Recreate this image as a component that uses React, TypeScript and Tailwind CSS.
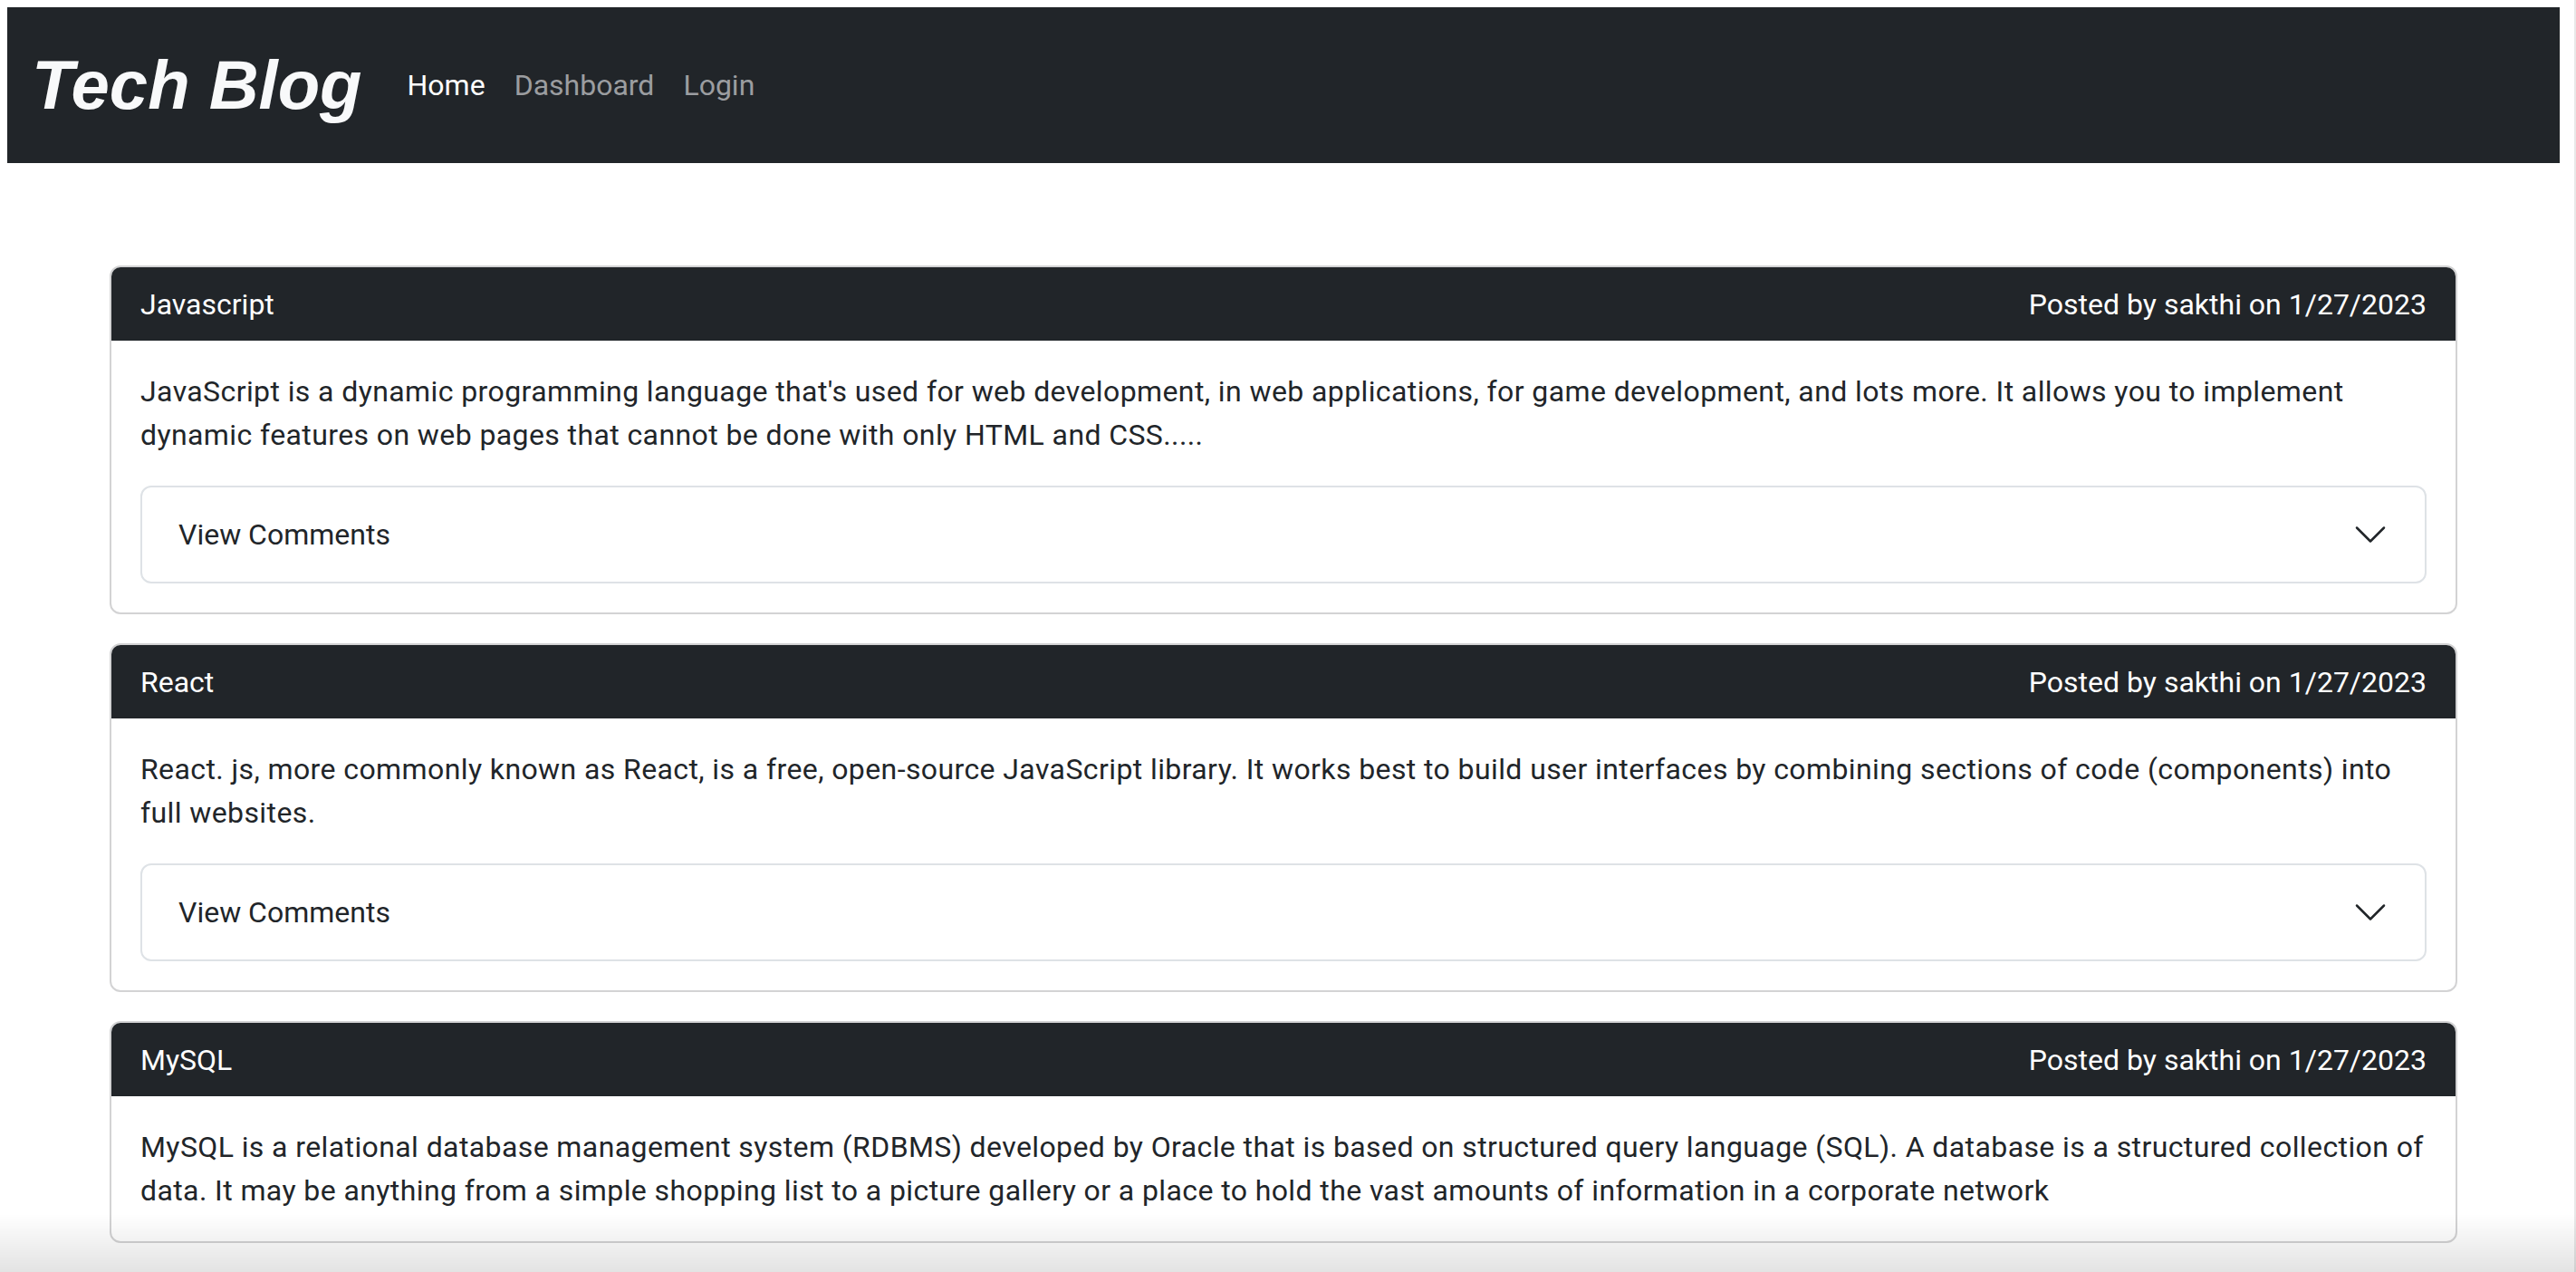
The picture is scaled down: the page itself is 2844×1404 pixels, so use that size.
import { useState } from 'react';

type Post = {
  id: number;
  title: string;
  author: string;
  date: string;
  body: string;
  comments: boolean;
};

const posts: Post[] = [
  {
    id: 1,
    title: 'Javascript',
    author: 'sakthi',
    date: '1/27/2023',
    body: "JavaScript is a dynamic programming language that's used for web development, in web applications, for game development, and lots more. It allows you to implement dynamic features on web pages that cannot be done with only HTML and CSS.....",
    comments: true,
  },
  {
    id: 2,
    title: 'React',
    author: 'sakthi',
    date: '1/27/2023',
    body: 'React. js, more commonly known as React, is a free, open-source JavaScript library. It works best to build user interfaces by combining sections of code (components) into full websites.',
    comments: true,
  },
  {
    id: 3,
    title: 'MySQL',
    author: 'sakthi',
    date: '1/27/2023',
    body: 'MySQL is a relational database management system (RDBMS) developed by Oracle that is based on structured query language (SQL). A database is a structured collection of data. It may be anything from a simple shopping list to a picture gallery or a place to hold the vast amounts of information in a corporate network',
    comments: false,
  },
];

function Chevron({ open }: { open: boolean }) {
  return (
    <svg
      viewBox="0 0 16 16"
      fill="none"
      stroke="#212529"
      strokeLinecap="round"
      strokeLinejoin="round"
      className={open ? 'h-[40px] w-[40px] rotate-180' : 'h-[40px] w-[40px]'}
    >
      <path d="M2 5L8 11L14 5" />
    </svg>
  );
}

function Comments() {
  const [open, setOpen] = useState(false);
  return (
    <div className="rounded-[12px] border-2 border-[#dee2e6]">
      <button
        type="button"
        onClick={() => setOpen(!open)}
        className="flex h-[104px] w-full items-center justify-between px-[40px] text-left text-[32px] text-[#212529]"
      >
        <span>View Comments</span>
        <Chevron open={open} />
      </button>
      {open && (
        <div className="border-t-2 border-[#dee2e6] px-[40px] py-[32px] text-[32px] text-[#6c757d]">
          No comments yet.
        </div>
      )}
    </div>
  );
}

function PostCard({ post }: { post: Post }) {
  return (
    <div className="mb-[32px] overflow-hidden rounded-[12px] border-2 border-[#d3d3d4]">
      <div className="flex h-[81px] items-center justify-between bg-[#212529] px-[32px] text-[32px] text-white">
        <span>{post.title}</span>
        <span>
          Posted by {post.author} on {post.date}
        </span>
      </div>
      <div className="p-[32px]">
        <p
          className={
            post.comments
              ? 'mb-[32px] text-[32px] leading-[48px] tracking-[0.4px]'
              : 'text-[32px] leading-[48px] tracking-[0.4px]'
          }
        >
          {post.body}
        </p>
        {post.comments && <Comments />}
      </div>
    </div>
  );
}

export default function App() {
  return (
    <div className="relative min-h-screen overflow-hidden border-r-2 border-[#e8e8e8] bg-white pl-[8px] pr-[16px] pt-[8px] font-['Roboto',sans-serif] text-[#212529]">
      <nav className="flex h-[172px] items-center bg-[#212529] pl-[27px]">
        <a href="#" className="mr-[34px] font-['Liberation_Sans',Arial,sans-serif] text-[76px] font-bold italic text-[#f8f9fa]">
          Tech Blog
        </a>
        <div className="flex text-[32px]">
          <a href="#" className="px-[16px] text-white">Home</a>
          <a href="#" className="px-[16px] text-[#9b9da0]">Dashboard</a>
          <a href="#" className="px-[16px] text-[#9b9da0]">Login</a>
        </div>
      </nav>

      <main className="mx-auto mt-[113px] w-[2592px]">
        {posts.map((post) => (
          <PostCard key={post.id} post={post} />
        ))}
      </main>

      <div className="pointer-events-none fixed bottom-0 left-0 right-0 h-[64px] bg-gradient-to-b from-transparent to-[#0000001c]" />
    </div>
  );
}
